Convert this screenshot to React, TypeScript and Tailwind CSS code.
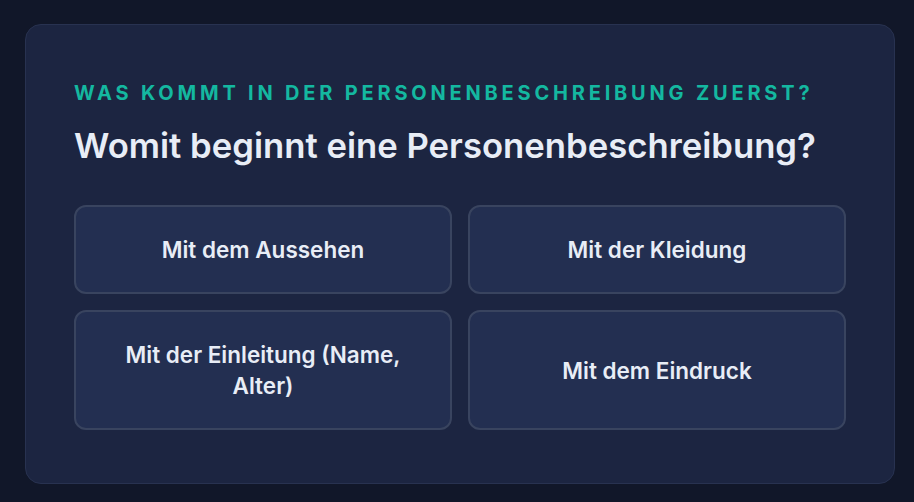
const options = [
  'Mit dem Aussehen',
  'Mit der Kleidung',
  'Mit der Einleitung (Name, Alter)',
  'Mit dem Eindruck',
]

export default function App() {
  return (
    <div className="min-h-screen w-full bg-[#111729] pl-[25px] pt-6 font-['Inter',sans-serif]">
      <div className="w-[870px] h-[460px] rounded-2xl border border-[#283250] bg-[#1c2541] px-12 pt-[56px]">
        <p className="text-[20px] leading-[24px] font-bold uppercase tracking-[0.19em] text-[#14b8a0] whitespace-nowrap">
          Was kommt in der Personenbeschreibung zuerst?
        </p>
        <h2 className="mt-5 text-[34.7px] leading-[40px] font-semibold text-[#e8edf6] whitespace-nowrap">
          Womit beginnt eine Personenbeschreibung?
        </h2>
        <div className="mt-10 grid grid-cols-2 gap-4">
          {options.map((o) => (
            <button
              key={o}
              className="rounded-xl border-2 border-[#39445f] bg-[#232f51] px-6 py-[27px] text-[22.5px] leading-[31px] font-semibold text-[#e8edf6]"
            >
              {o}
            </button>
          ))}
        </div>
      </div>
    </div>
  )
}
